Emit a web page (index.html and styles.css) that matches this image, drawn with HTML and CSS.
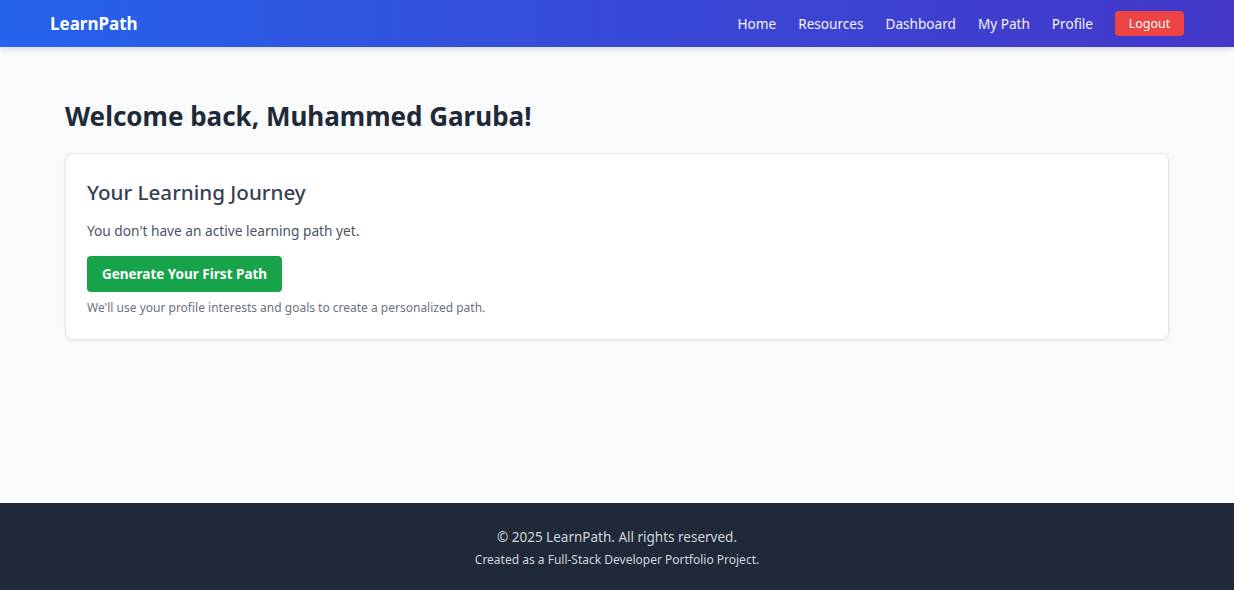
FILE: index.html
```html
<!DOCTYPE html>
<html lang="en">
<head>
<meta charset="utf-8">
<title>LearnPath</title>
<link rel="stylesheet" href="styles.css">
</head>
<body>
<div class="page">
  <header class="topbar">
    <a class="logo" href="#">LearnPath</a>
    <nav class="nav">
      <a href="#">Home</a>
      <a href="#">Resources</a>
      <a href="#">Dashboard</a>
      <a href="#">My Path</a>
      <a href="#">Profile</a>
      <button class="logout">Logout</button>
    </nav>
  </header>
  <main class="main">
    <h1 class="welcome">Welcome back, Muhammed Garuba!</h1>
    <section class="card">
      <h2 class="card-title">Your Learning Journey</h2>
      <p class="card-text">You don't have an active learning path yet.</p>
      <button class="generate">Generate Your First Path</button>
      <p class="card-note">We'll use your profile interests and goals to create a personalized path.</p>
    </section>
  </main>
  <footer class="footer">
    <p class="copy">© 2025 LearnPath. All rights reserved.</p>
    <p class="credit">Created as a Full-Stack Developer Portfolio Project.</p>
  </footer>
</div>
</body>
</html>
```

FILE: styles.css
```css
* { box-sizing: border-box; }
html, body { margin: 0; padding: 0; }
body {
  font-family: "Noto Sans", "Open Sans", sans-serif;
  background: #f8fafc;
  color: #1f2937;
}
.page {
  min-height: 100vh;
  display: flex;
  flex-direction: column;
}
.topbar {
  height: 47px;
  display: flex;
  align-items: center;
  justify-content: space-between;
  padding: 0 50px;
  background: linear-gradient(90deg, #2563eb 0%, #3b45d4 60%, #4338ca 100%);
  box-shadow: 0 2px 6px rgba(0,0,0,0.15);
  position: relative;
  z-index: 1;
}
.logo {
  color: #fff;
  text-decoration: none;
  font-weight: 700;
  font-size: 17px;
}
.nav {
  display: flex;
  align-items: center;
  gap: 22px;
}
.nav a {
  color: #f3f4f6;
  text-decoration: none;
  font-size: 13.6px;
}
.logout {
  background: #ef4444;
  color: #fff;
  border: none;
  border-radius: 4px;
  font-family: inherit;
  font-size: 12.5px;
  height: 25px;
  width: 69px;
  padding: 0;
}
.main {
  flex: 1;
  padding: 0 65px;
}
.welcome {
  margin: 52px 0 20px;
  font-size: 26px;
  font-weight: 700;
  color: #1f2937;
  line-height: 34px;
}
.card {
  background: #fff;
  border: 1px solid #e5e7eb;
  border-radius: 8px;
  box-shadow: 0 1px 3px rgba(0,0,0,0.08);
  padding: 22px 21px 22px;
}
.card-title {
  margin: 0 0 13px;
  font-size: 20.6px;
  font-weight: 500;
  color: #374151;
  line-height: 32px;
}
.card-text {
  margin: 0 0 15px;
  font-size: 13.7px;
  color: #4b5563;
  line-height: 20px;
}
.generate {
  display: block;
  background: #16a34a;
  color: #fff;
  border: none;
  border-radius: 4px;
  font-family: inherit;
  font-weight: 700;
  font-size: 13.5px;
  height: 36px;
  width: 195px;
  padding: 0;
}
.card-note {
  margin: 7px 0 0;
  font-size: 12px;
  color: #6b7280;
  line-height: 18px;
}
.footer {
  height: 87px;
  background: #1f2937;
  text-align: center;
  padding-top: 24px;
}
.copy {
  margin: 0 0 4px;
  color: #d1d5db;
  font-size: 13.5px;
  line-height: 20px;
}
.credit {
  margin: 0;
  color: #d1d5db;
  font-size: 12px;
  line-height: 18px;
}
```
